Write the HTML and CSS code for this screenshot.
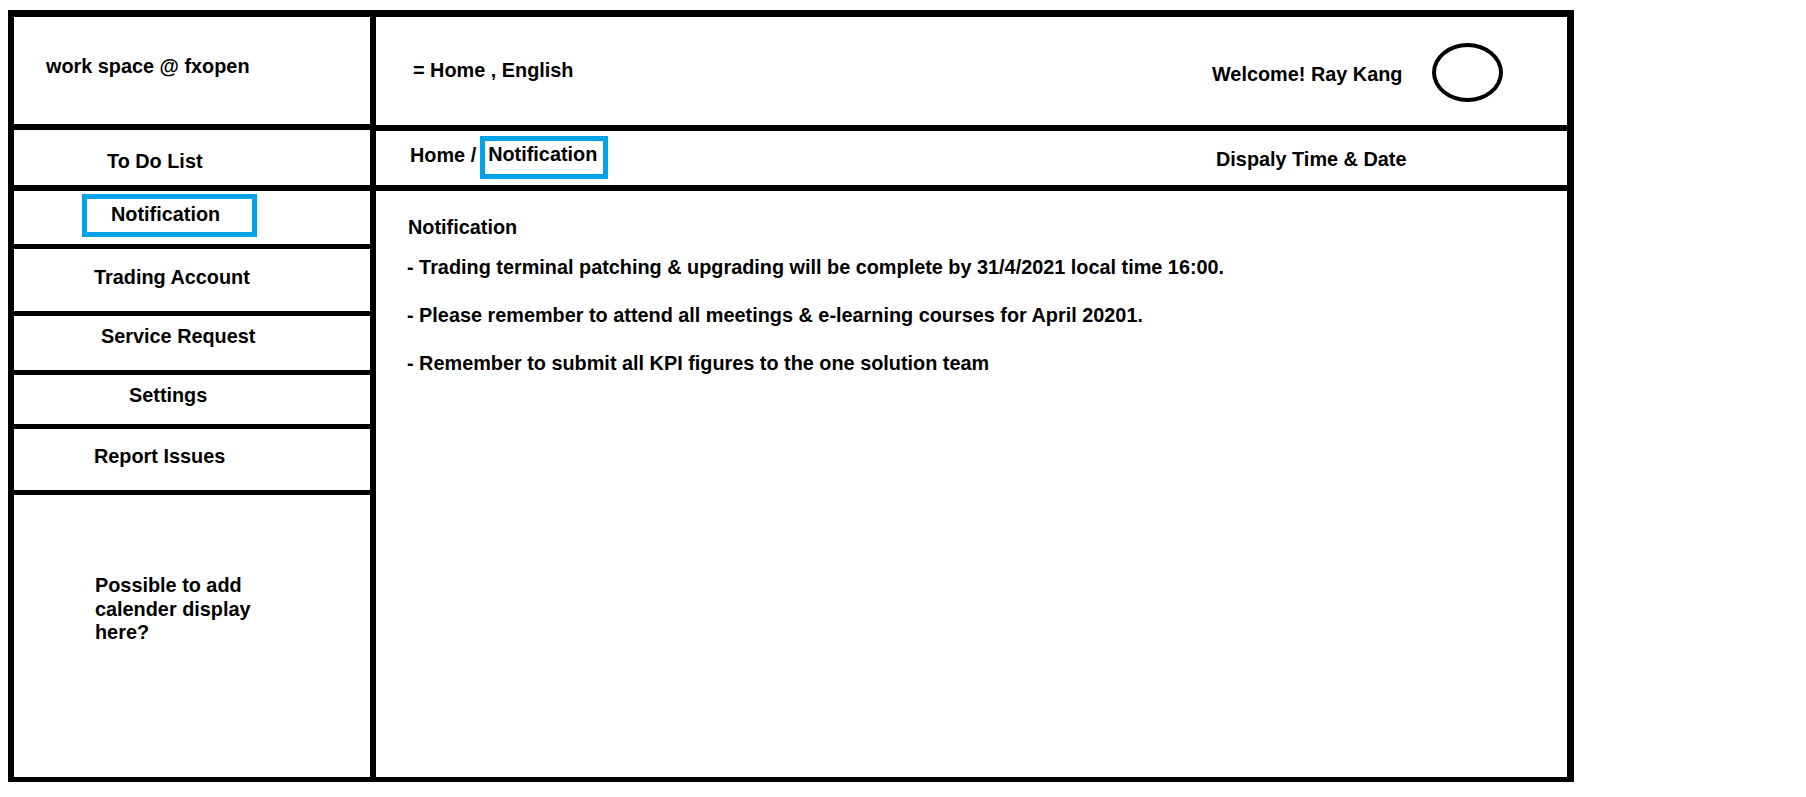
FILE: index.html
```html
<!DOCTYPE html>
<html lang="en">
<head>
<meta charset="utf-8">
<title>work space @ fxopen</title>
<link rel="stylesheet" href="styles.css">
</head>
<body>
<div class="frame">
  <aside class="sidebar">
    <div class="row brand">work space @ fxopen</div>
    <div class="row todo">To Do List</div>
    <div class="row notif"><span class="hl hl-side">Notification</span></div>
    <div class="row trading">Trading Account</div>
    <div class="row service">Service Request</div>
    <div class="row settings">Settings</div>
    <div class="row report">Report Issues</div>
    <div class="row calendar"><p class="cal-text">Possible to add calender display here?</p></div>
  </aside>
  <main class="main">
    <header class="topbar">
      <div class="topbar-left">= Home , English</div>
      <div class="topbar-right">
        <span class="welcome">Welcome! Ray Kang</span>
        <span class="avatar"></span>
      </div>
    </header>
    <nav class="crumbs">
      <div class="crumbs-left">
        <span class="crumb-home">Home /</span>
        <span class="hl hl-crumb">Notification</span>
      </div>
      <div class="crumbs-right">Dispaly Time &amp; Date</div>
    </nav>
    <section class="content">
      <h1 class="content-title">Notification</h1>
      <ul class="notes">
        <li>- Trading terminal patching &amp; upgrading will be complete by 31/4/2021 local time 16:00.</li>
        <li>- Please remember to attend all meetings &amp; e-learning courses for April 20201.</li>
        <li>- Remember to submit all KPI figures to the one solution team</li>
      </ul>
    </section>
  </main>
</div>
</body>
</html>
```

FILE: styles.css
```css
* { box-sizing: border-box; }

html, body {
  margin: 0;
  padding: 0;
  background: #fff;
}

body {
  font-family: "Liberation Sans", Arial, sans-serif;
  font-weight: bold;
  font-size: 19.85px;
  line-height: 23px;
  color: #000;
}

.frame {
  margin: 10px 0 0 8px;
  width: 1566px;
  height: 772px;
  border-style: solid;
  border-color: #000;
  border-width: 7px 7px 5px 6px;
  display: flex;
}

/* Sidebar */
.sidebar {
  width: 362px;
  border-right: 6px solid #000;
  display: flex;
  flex-direction: column;
}

.row {
  border-bottom: 5px solid #000;
}

.brand    { height: 113px; border-bottom-width: 6px; padding: 38px 0 0 32px; }
.todo     { height: 61px;  border-bottom-width: 6px; padding: 20px 0 0 93px; }
.notif    { height: 58px;  padding: 3px 0 0 68px; }
.trading  { height: 67px;  padding: 17px 0 0 80px; }
.service  { height: 59px;  padding: 9px 0 0 87px; }
.settings { height: 54px;  padding: 9px 0 0 115px; }
.report   { height: 66px;  padding: 16px 0 0 80px; }
.calendar { flex: 1; border-bottom: 0; padding: 79px 0 0 81px; }

.cal-text {
  margin: 0;
  max-width: 170px;
  line-height: 23.5px;
}

.hl {
  display: inline-block;
  border: 5px solid #00a2e8;
}

.hl-side {
  width: 175px;
  height: 43px;
  padding: 4px 0 0 24px;
}

/* Main */
.main {
  flex: 1;
  display: flex;
  flex-direction: column;
}

.topbar {
  height: 114px;
  border-bottom: 6px solid #000;
  display: grid;
  grid-template-columns: 836px 1fr;
  align-items: start;
}

.topbar-left {
  padding: 42px 0 0 37px;
}

.topbar-right {
  display: flex;
  align-items: flex-start;
  gap: 30px;
}

.welcome {
  margin-top: 46px;
}

.avatar {
  width: 71px;
  height: 59px;
  margin-top: 26px;
  border: 4px solid #000;
  border-radius: 50%;
}

.crumbs {
  height: 60px;
  border-bottom: 6px solid #000;
  display: grid;
  grid-template-columns: 836px 1fr;
  align-items: start;
}

.crumbs-left {
  display: flex;
  align-items: flex-start;
  padding-left: 34px;
}

.crumb-home {
  margin-top: 13px;
}

.hl-crumb {
  margin: 5px 0 0 4px;
  width: 128px;
  height: 43px;
  padding: 2px 0 0 3px;
}

.crumbs-right {
  padding: 17px 0 0 4px;
}

.content {
  flex: 1;
  padding: 25px 0 0 31px;
}

.content-title {
  margin: 0;
  font-size: inherit;
  line-height: 23px;
  padding-left: 1px;
}

.notes {
  list-style: none;
  margin: 17px 0 0;
  padding: 0;
}

.notes li + li {
  margin-top: 25px;
}
```
